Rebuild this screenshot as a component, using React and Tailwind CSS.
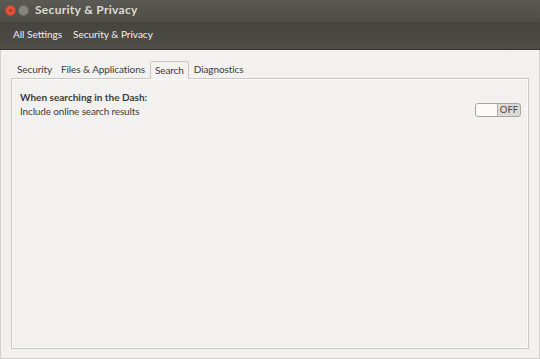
import React from "react";

const font = { fontFamily: 'Lato, "Open Sans", "Liberation Sans", sans-serif' };

function Tab({ label, active }) {
    if (active) {
        return (
            <div className="relative z-10 -mb-px h-[18px] px-[4px] border border-[#c9c7c2] border-b-[#f2f1ef] rounded-t-[2px] bg-[#f2f1ef] text-[#3c3c3c] flex items-center">
                {label}
            </div>
        );
    }
    return <div className="h-[17px] px-[4px] text-[#3c3c3c] flex items-center">{label}</div>;
}

export default function App() {
    return (
        <div style={font} className="w-[540px] h-[359px] bg-[#3c3b37] overflow-hidden flex flex-col text-[10px]">
            {/* title bar */}
            <div className="h-[22px] flex items-center pl-[5px] pb-[2px] bg-gradient-to-b from-[#5a5953] to-[#4d4c47]">
                <div className="w-[11px] h-[11px] rounded-full bg-[#e3553a] border border-[#b8432c] flex items-center justify-center">
                    <span className="text-[7px] leading-none text-[#8a2c1a] font-bold">×</span>
                </div>
                <div className="ml-[2px] w-[11px] h-[11px] rounded-full bg-[#85847e] border border-[#6a6964]"></div>
                <span className="ml-[6px] font-bold text-[#dfdbd2] text-[12px] tracking-[0.3px]">Security &amp; Privacy</span>
            </div>
            {/* toolbar */}
            <div className="h-[28px] flex items-center pl-[13px] pb-[2px] gap-[11px] bg-gradient-to-b from-[#45443f] to-[#4e4d48] text-[#f2f1ef] text-[10px] border-b border-[#35342f]">
                <span>All Settings</span>
                <span>Security &amp; Privacy</span>
            </div>
            {/* body */}
            <div className="flex-1 bg-[#f2f1ef] border-x border-b border-[#d3d1cc] flex flex-col pt-[11px] pb-[9px] px-[10px]">
                <div className="flex items-end pl-[2px] gap-[1px] tracking-[-0.1px]">
                    <Tab label="Security" />
                    <Tab label="Files & Applications" />
                    <Tab label="Search" active />
                    <Tab label="Diagnostics" />
                </div>
                <div className="flex-1 border border-[#c9c7c2] bg-[#f2f1ef] shadow-[inset_0_0_0_1px_#fbfbfa] px-[8px] pt-[11px] flex flex-col">
                    <div className="font-bold text-[#3c3c3c] leading-[14px]">When searching in the Dash:</div>
                    <div className="flex items-center justify-between text-[#3c3c3c]">
                        <span className="leading-[14px] tracking-[-0.15px]">Include online search results</span>
                        <div className="mr-[-1px] -mt-[2px] w-[46px] h-[14px] rounded-[3px] border border-[#a8a6a0] bg-[#dcdad5] flex overflow-hidden">
                            <div className="w-[22px] h-full rounded-[2px] bg-[#fbfaf9] border-r border-[#b0aea8]"></div>
                            <span className="flex-1 text-center text-[9.5px] leading-[12px] text-[#4a4a4a]">OFF</span>
                        </div>
                    </div>
                </div>
            </div>
        </div>
    );
}
